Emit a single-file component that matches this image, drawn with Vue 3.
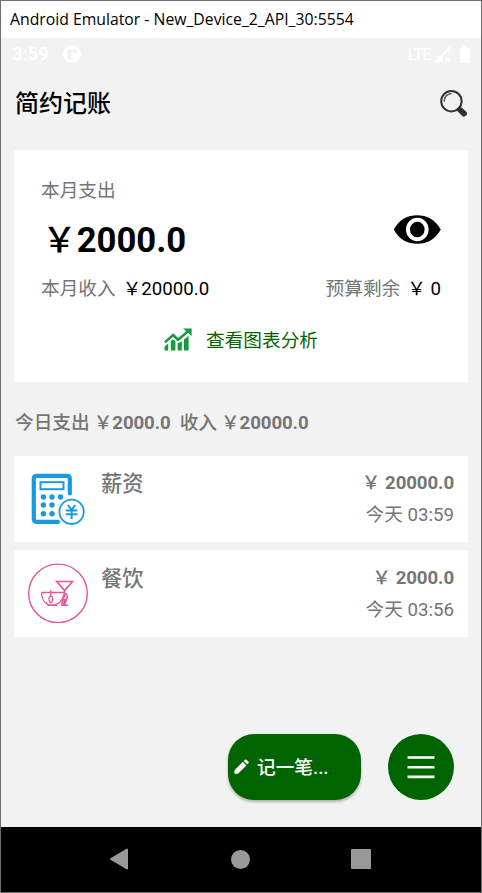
<script setup>
const records = [
  { kind: 'salary', name: '薪资', amount: '20000.0', time: '今天 03:59' },
  { kind: 'dining', name: '餐饮', amount: '2000.0', time: '今天 03:56' },
]
</script>

<template>
  <div class="window">
    <div class="titlebar"><span>Android Emulator - New_Device_2_API_30:5554</span></div>
    <div class="screen">
      <div class="status">
        <span class="clock">3:59</span>
        <svg class="notif" width="18" height="18" viewBox="0 0 18 18">
          <circle cx="9" cy="9" r="9" fill="#fff" />
          <path d="M4 6Q4 4 6 4H8.5V14.5H6Q4 14 4 11Z" fill="#f2f2f2" />
          <circle cx="12.2" cy="6" r="2.4" fill="#f2f2f2" />
        </svg>
        <span class="lte">LTE</span>
        <svg class="signal" width="17" height="17" viewBox="0 0 17 17">
          <path d="M0 16L16 0V9H14.5V4L9 9.5V16Z" fill="#fff" />
          <path d="M11 11l5 5M16 11l-5 5" stroke="#fff" stroke-width="1.7" />
        </svg>
        <svg class="battery" width="10" height="17" viewBox="0 0 10 17">
          <path d="M3 0h4v2h2q1 0 1 1v13q0 1-1 1H1q-1 0-1-1V3q0-1 1-1h2z" fill="#fff" />
        </svg>
      </div>

      <header class="header">
        <h1>简约记账</h1>
        <svg width="28" height="28" viewBox="0 0 28 28" fill="none">
          <circle cx="11.4" cy="11.2" r="10.2" stroke="#303231" stroke-width="2" />
          <path d="M4.2 11.8C4.3 7.4 7 4.1 11.5 3.6" stroke="#555" stroke-width="1.5" />
          <path d="M18 17.6l3 3" stroke="#303231" stroke-width="2.5" />
          <path d="M20.2 20L24 23.6" stroke="#303231" stroke-width="5.8" stroke-linecap="round" />
        </svg>
      </header>

      <section class="summary">
        <div class="label">本月支出</div>
        <div class="total">
          <strong><span>&#xFFE5;</span>2000.0</strong>
          <svg width="48" height="29" viewBox="0 0 48 29">
            <path d="M.8 14.5C6 4.5 15 .3 24.3 .3S42 4.5 47.8 14.5C42 24.5 34 28.8 24.3 28.8S6 24.5 .8 14.5Z" />
            <ellipse cx="24.3" cy="14.5" rx="9.3" ry="9.8" stroke="#fff" stroke-width="4" />
          </svg>
        </div>
        <div class="figures">
          <span class="label">本月收入</span><span class="income">&#xFFE5;20000.0</span>
          <span class="label rest">预算剩余</span><span class="budget">&#xFFE5; 0</span>
        </div>
        <div class="chart">
          <svg width="28" height="23" viewBox="0 0 28 23" fill="none">
            <path d="M.8 14.4L9.2 7 14 11.7 24 3.4" stroke="#159a3c" stroke-width="2.5" />
            <path d="M19 .4H27.6V8Z" fill="#159a3c" />
            <path d="M.6 18.5L4.2 15.5V22.6H.6ZM6.8 13L9 11.5 11.4 13V22.6H6.8ZM13.6 15.5L17.8 13.3V22.6H13.6ZM20 11.5L24.6 8V22.6H20Z" fill="#159a3c" />
          </svg>
          <span>查看图表分析</span>
        </div>
      </section>

      <div class="today">
        <span>今日支出</span><span class="sum">&#xFFE5;<b>2000.0</b></span>
        <span class="in">收入</span><span class="sum">&#xFFE5;<b>20000.0</b></span>
      </div>

      <ul class="records">
        <li v-for="r in records" :key="r.kind">
          <svg v-if="r.kind === 'salary'" width="60" height="60" viewBox="0 0 60 60" fill="none" stroke="#199ae0">
            <path d="M41.8 24.5V9.5Q41.8 6.8 39.1 6.8H8.5Q5.8 6.8 5.8 9.5V50Q5.8 52.8 8.5 52.8H30" stroke-width="4.2" stroke-linecap="round" />
            <rect x="12.5" y="13.2" width="23" height="7" stroke-width="2" />
            <g fill="#199ae0" stroke="none">
              <circle cx="15.4" cy="28" r="2.7" /><circle cx="24" cy="28" r="2.7" /><circle cx="32.5" cy="28" r="2.7" />
              <circle cx="15.4" cy="36" r="2.7" /><circle cx="24" cy="36" r="2.7" />
              <circle cx="15.4" cy="44.8" r="2.7" /><circle cx="24" cy="44.8" r="2.7" />
            </g>
            <circle cx="43.6" cy="42.8" r="12.2" stroke-width="1.8" />
            <path d="M40 36L43.6 41L47.2 36M37.8 41.5H49.4M37.8 45.3H49.4M43.6 41V50" stroke-width="2" />
          </svg>
          <svg v-else width="60" height="60" viewBox="0 0 60 60" fill="none" stroke="#e4559c">
            <circle cx="30" cy="30.4" r="29.3" stroke-width="1.4" />
            <path d="M13.5 29.5H36M13.5 29.5C13.8 37.5 18 42 24 42.2C30 42 35 38 36 31M18 39L20 42.3H29M22.8 27V34M22.8 32.5C20.3 33.5 20.3 38.5 22.8 40C25.3 38.5 25.3 33.5 22.8 32.5" stroke-width="1.3" />
            <path d="M28.7 18.5H44.5L36.6 27.5ZM36.6 27V34M36 31C38 30.3 39.7 31.6 39.2 34.8L37 40.5H34L36 34M33 42.3H40.3M36.6 36V42" stroke-width="1.6" />
          </svg>
          <span class="name">{{ r.name }}</span>
          <div class="meta"><span class="amount">&#xFFE5; <b>{{ r.amount }}</b></span><span>{{ r.time }}</span></div>
        </li>
      </ul>

      <div class="actions">
        <button class="add">
          <svg width="16" height="16" viewBox="0 0 16 16" fill="#fff">
            <path d="M.4 11.2L8.8 2.8L12.4 6.4L4 14.8H.4ZM9.7 1.9L10.9.8Q11.7.1 12.5.8L14.5 2.8Q15.1 3.5 14.4 4.3L13.3 5.4Z" />
          </svg>
          <span>记一笔...</span>
        </button>
        <button class="menu">
          <svg width="28" height="24" viewBox="0 0 28 24"><path d="M.5 2.5H27.5M.5 12.2H27.5M.5 21.9H27.5" stroke="#fff" stroke-width="2.6" /></svg>
        </button>
      </div>
    </div>
    <nav class="nav">
      <svg width="20" height="22" viewBox="0 0 20 22"><path d="M2 11L18 1.5V20.5Z" fill="#999" stroke="#999" stroke-width="2" stroke-linejoin="round" /></svg>
      <i class="home"></i><i class="recent"></i>
    </nav>
  </div>
</template>

<style>
body { margin: 0; }
</style>

<style scoped>
* { box-sizing: border-box; }
.window {
  width: 482px; height: 893px; border: 1px solid #6f6f6f; display: flex; flex-direction: column;
  font-family: Roboto, "Noto Sans CJK SC", sans-serif; font-size: 18.67px; color: #757575; white-space: nowrap; overflow: hidden;
}
svg { display: block; flex: none; }
.titlebar { height: 37px; background: #fff; color: #000; font: 15.77px/37px "Open Sans", sans-serif; padding-left: 9px; }
.screen { height: 789px; background: #f2f2f2; display: flex; flex-direction: column; padding: 0 13px; }
.status { height: 32px; display: flex; align-items: center; color: #fff; margin: 0 -3px; flex: none; }
.clock { font-size: 18.67px; font-weight: 500; width: 52px; padding-left: 1px; }
.lte { margin-left: auto; font-size: 16px; letter-spacing: -.6px; }
.signal { margin-left: 3px; }
.battery { margin: 0 1px 0 9px; }
.header { height: 80px; padding: 0 0 12px 1px; display: flex; align-items: center; justify-content: space-between; color: #000; flex: none; }
h1 { margin: 0; font-size: 24px; font-weight: 500; line-height: 36px; }
.summary { height: 232px; background: #fff; padding: 27px 27px 0; flex: none; color: #000; }
.label { color: #757575; line-height: 28px; }
.total { display: flex; justify-content: space-between; align-items: flex-start; height: 70px; }
.total strong { font-size: 34.67px; font-weight: 700; line-height: 52px; padding: 9px 0 0 1px; display: flex; align-items: baseline; }
.total strong span { font-weight: 500; }
.total svg { margin-top: 10px; }
.figures { display: flex; line-height: 28px; }
.income { margin-left: 7px; }
.rest { margin-left: auto; }
.budget { margin-left: 7px; }
.chart { display: flex; align-items: center; justify-content: center; gap: 14px; height: 28px; margin-top: 21px; color: #006400; }
.chart svg { margin-top: 2px; }
.today { height: 74px; display: flex; align-items: baseline; padding: 27px 0 0 1px; font-weight: 500; line-height: 28px; flex: none; }
.sum { margin-left: 4px; }
.in { margin-left: 9px; }
b { font-weight: 700; letter-spacing: -.1px; }
.records { list-style: none; margin: 0; padding: 0; display: flex; flex-direction: column; gap: 8px; }
.records li { height: 86px; background: #fff; padding: 13px 14px; display: flex; }
.records li:last-child { height: 87px; }
.records li:last-child .name, .records li:last-child .meta { margin-top: 1px; }
.name { font-size: 21.33px; font-weight: 500; line-height: 30px; margin-left: 13px; }
.meta { margin-left: auto; text-align: right; display: flex; flex-direction: column; line-height: 28px; gap: 4px; }
.amount { font-weight: 500; }
.actions { margin-top: auto; display: flex; justify-content: flex-end; gap: 27px; padding: 0 14px 27px 0; }
button { border: 0; margin: 0; background: #006400; height: 66px; display: flex; align-items: center; font-family: inherit; color: #fff; }
.add { width: 133px; border-radius: 26px; padding: 0 6px; gap: 7px; font-size: 18.67px; font-weight: 500; box-shadow: 0 2px 3px rgba(0,0,0,.28); }
.add span { padding-bottom: 3px; }
.menu { width: 66px; border-radius: 50%; justify-content: center; padding: 0; }
.nav { height: 65px; background: #000; display: flex; align-items: center; padding: 0 0 1px 108px; }
.home { width: 19px; height: 19px; border-radius: 50%; background: #999; margin-left: 102px; }
.recent { width: 20px; height: 20px; border-radius: 1px; background: #999; margin-left: 101px; }
</style>
